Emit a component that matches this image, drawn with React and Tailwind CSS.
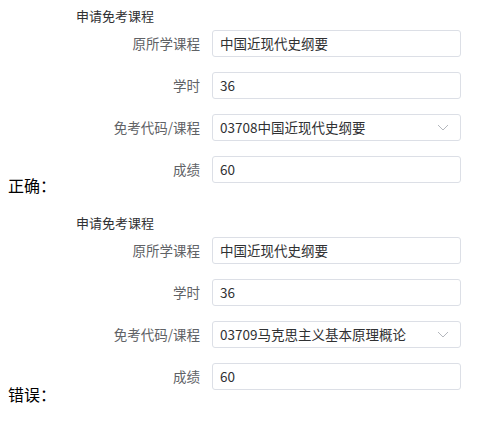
import React from 'react';

const font = { fontFamily: '"Noto Sans CJK SC", "Noto Sans", sans-serif' };

function Field({ label, value, select }) {
  return (
    <div className="flex items-center h-[27px]">
      <div className="w-[156px] pr-[12px] text-right text-[13.5px] text-[#606266] leading-none">{label}</div>
      <div className="w-[249px] h-full border border-[#dcdfe6] rounded-[3px] bg-white flex items-center pl-[7px] pr-[10px] text-[13.5px] text-[#303133]">
        <span className="flex-1 leading-none">{value}</span>
        {select && (
          <svg width="12" height="7" viewBox="0 0 12 7" fill="none" className="mr-[1px]">
            <path d="M1 1l5 5 5-5" stroke="#b4b7bd" strokeWidth="1" />
          </svg>
        )}
      </div>
    </div>
  );
}

function FormShot({ course, height }) {
  return (
    <div className={`w-[420px] ${height}`}>
      <div className="pt-[7px] pl-[20px] text-[13px] leading-[17px] text-[#303133]">申请免考课程</div>
      <div className="mt-[6px] flex flex-col gap-[15px]">
        <Field label="原所学课程" value="中国近现代史纲要" />
        <Field label="学时" value="36" />
        <Field label="免考代码/课程" value={course} select />
        <Field label="成绩" value="60" />
      </div>
    </div>
  );
}

export default function App() {
  return (
    <div className="w-[503px] h-[438px] bg-white pl-[8px]" style={font}>
      <div className="flex items-end">
        <span className="w-[48px] text-[16px] leading-[16px] text-black mb-[2px]">正确：</span>
        <FormShot course="03708中国近现代史纲要" height="h-[195px]" />
      </div>
      <div className="flex items-end mt-[12px]">
        <span className="w-[48px] text-[16px] leading-[16px] text-black mb-[2px]">错误：</span>
        <FormShot course="03709马克思主义基本原理概论" height="h-[197px]" />
      </div>
    </div>
  );
}
